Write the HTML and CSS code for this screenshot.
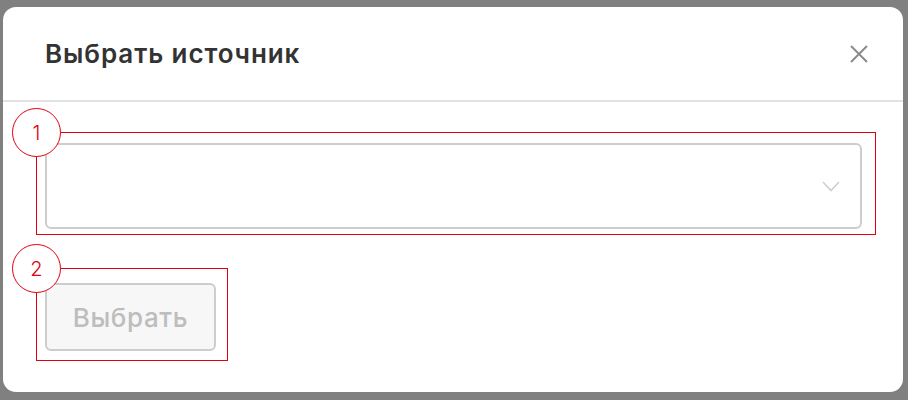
FILE: index.html
```html
<!DOCTYPE html>
<html lang="ru">
<head>
    <meta charset="UTF-8">
    <title>Выбрать источник</title>
    <link rel="stylesheet" href="styles.css">
</head>
<body>
    <div class="modal">
        <div class="modal-header">
            <h2>Выбрать источник</h2>
            <button class="close" aria-label="Закрыть">
                <svg width="20" height="20" viewBox="0 0 20 20">
                    <path d="M2 2 L18 18 M18 2 L2 18" stroke="#8a8a8a" stroke-width="2" fill="none"/>
                </svg>
            </button>
        </div>

        <div class="modal-body">
            <div class="field">
                <div class="select">
                    <svg class="chevron" width="18" height="11" viewBox="0 0 18 11">
                        <path d="M1 1 L9 9.5 L17 1" stroke="#cfcfcf" stroke-width="1.6" fill="none"/>
                    </svg>
                </div>
                <div class="mark mark-select"><span class="num">1</span></div>
            </div>

            <div class="field field-btn">
                <button class="submit" disabled>Выбрать</button>
                <div class="mark mark-btn"><span class="num">2</span></div>
            </div>
        </div>
    </div>
</body>
</html>
```

FILE: styles.css
```css
body {
    margin: 0;
    padding: 7px 5px 8px 3px;
    background: #808080;
    font-family: 'Inter', 'Liberation Sans', sans-serif;
    height: 400px;
    box-sizing: border-box;
    overflow: hidden;
}

.modal {
    background: #fff;
    border-radius: 13px;
    height: 385px;
    display: flex;
    flex-direction: column;
}

.modal-header {
    height: 94px;
    border-bottom: 2px solid #e2e2e2;
    display: flex;
    align-items: center;
    justify-content: space-between;
    padding: 0 34px 0 42px;
}

.modal-header h2 {
    margin: 0;
    font-size: 26px;
    font-weight: 600;
    color: #333;
    letter-spacing: 0.9px;
}

.close {
    background: none;
    border: none;
    padding: 0;
    width: 20px;
    height: 20px;
    cursor: pointer;
}

.modal-body {
    padding: 41px 41px 41px 42px;
    display: flex;
    flex-direction: column;
    gap: 54px;
}

.field {
    position: relative;
}

.select {
    height: 86px;
    border: 2px solid #cdcdcd;
    border-radius: 6px;
    box-sizing: border-box;
    display: flex;
    align-items: center;
    justify-content: flex-end;
    padding-right: 20px;
}

.field-btn {
    align-self: flex-start;
}

.submit {
    width: 171px;
    height: 68px;
    background: #f7f7f7;
    border: 2px solid #cdcdcd;
    border-radius: 6px;
    font-family: inherit;
    font-size: 26px;
    font-weight: 500;
    color: #bdbdbd;
    letter-spacing: 0.6px;
}

/* annotation frames */
.mark {
    position: absolute;
    border: 1px solid #e0000f;
}

.mark-select {
    top: -11px;
    left: -9px;
    right: -14px;
    bottom: -6px;
}

.mark-btn {
    top: -15px;
    left: -9px;
    right: -12px;
    bottom: -10px;
}

.num {
    position: absolute;
    top: -25px;
    left: -25px;
    width: 47px;
    height: 47px;
    border: 1px solid #e0000f;
    border-radius: 50%;
    background: #fff;
    color: #e0000f;
    font-size: 20px;
    font-weight: 300;
    display: flex;
    align-items: center;
    justify-content: center;
}
```
